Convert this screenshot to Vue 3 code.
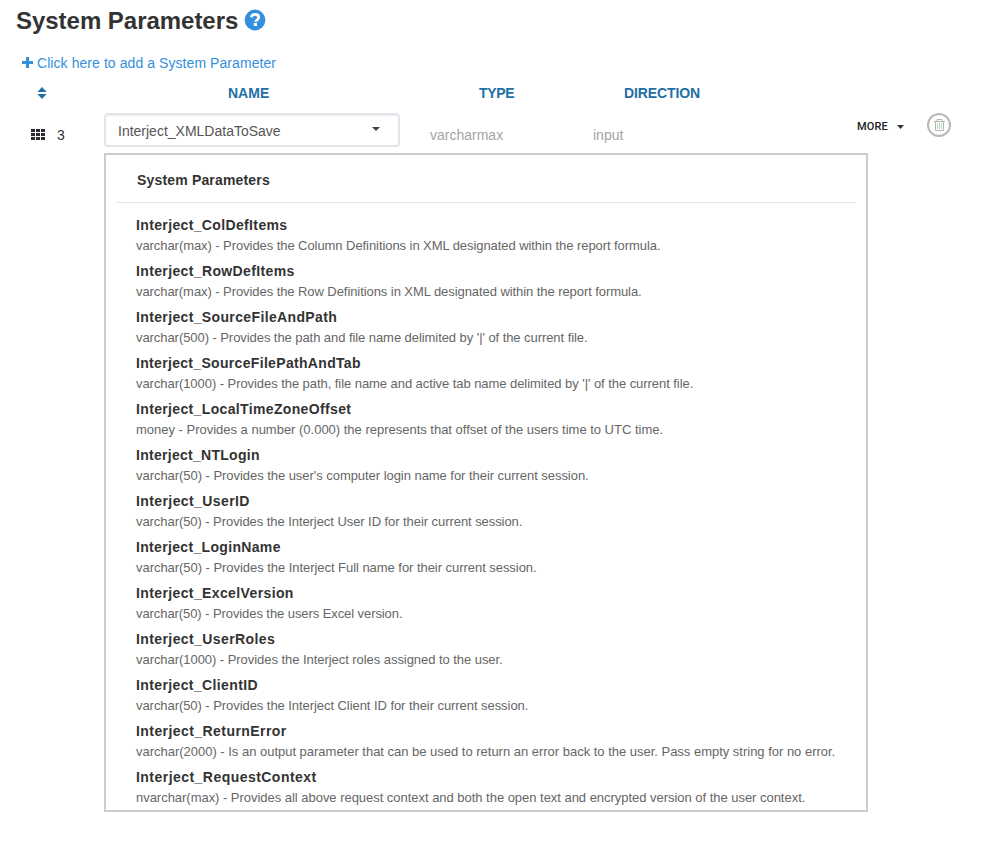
<script setup>
// name, description, and the tracking of each (px)
const items = [
  ['Interject_ColDefItems', "varchar(max) - Provides the Column Definitions in XML designated within the report formula.", 0.36, -0.067],
  ['Interject_RowDefItems', "varchar(max) - Provides the Row Definitions in XML designated within the report formula.", 0.37, -0.07],
  ['Interject_SourceFileAndPath', "varchar(500) - Provides the path and file name delimited by '|' of the current file.", 0.36, -0.066],
  ['Interject_SourceFilePathAndTab', "varchar(1000) - Provides the path, file name and active tab name delimited by '|' of the current file.", 0.32, -0.06],
  ['Interject_LocalTimeZoneOffset', "money - Provides a number (0.000) the represents that offset of the users time to UTC time.", 0.35, -0.01],
  ['Interject_NTLogin', "varchar(50) - Provides the user's computer login name for their current session.", 0.28, -0.045],
  ['Interject_UserID', "varchar(50) - Provides the Interject User ID for their current session.", 0.4, -0.064],
  ['Interject_LoginName', "varchar(50) - Provides the Interject Full name for their current session.", 0.33, -0.045],
  ['Interject_ExcelVersion', "varchar(50) - Provides the users Excel version.", 0.38, -0.08],
  ['Interject_UserRoles', "varchar(1000) - Provides the Interject roles assigned to the user.", 0.4, -0.05],
  ['Interject_ClientID', "varchar(50) - Provides the Interject Client ID for their current session.", 0.38, -0.06],
  ['Interject_ReturnError', "varchar(2000) - Is an output parameter that can be used to return an error back to the user. Pass empty string for no error.", 0.43, -0.014],
  ['Interject_RequestContext', "nvarchar(max) - Provides all above request context and both the open text and encrypted version of the user context.", 0.46, -0.03],
]
</script>

<template>
  <main class="page">
    <h1 class="title">
      <span>System Parameters</span>
      <svg class="help" viewBox="0 0 22 22" width="22" height="22">
        <circle cx="11" cy="11" r="10.4" fill="#348fdd" />
        <path d="M7.2 8.3C7.8 6.1 9.2 5.3 11 5.3c2.2 0 3.7 1.2 3.7 3 0 2.4-2.9 2.5-2.9 4.4" fill="none" stroke="#fff" stroke-width="2.8" />
        <rect x="9.8" y="14" width="3.2" height="3" fill="#fff" />
      </svg>
    </h1>
    <a class="add">
      <svg viewBox="0 0 11 11" width="11" height="11"><path d="M4 0h3v4h4v3H7v4H4V7H0V4h4z" fill="#348fdd" /></svg>
      <span>Click here to add a System Parameter</span>
    </a>
    <div class="grid head">
      <svg class="sort" viewBox="0 0 10 12" width="10" height="12"><path d="M5 0l4.6 5H.4zM5 12l4.6-5H.4z" fill="#236fa5" /></svg>
      <span class="h-name">NAME</span>
      <span class="h-type">TYPE</span>
      <span class="h-dir">DIRECTION</span>
    </div>
    <div class="grid row">
      <div class="order">
        <svg viewBox="0 0 14 11" width="14" height="11" fill="#2b2b33">
          <template v-for="r in 3" :key="r">
            <rect v-for="c in 3" :key="c" :x="(c - 1) * 5" :y="(r - 1) * 4" width="4" height="3" />
          </template>
        </svg>
        <span>3</span>
      </div>
      <div class="select">
        <span>Interject_XMLDataToSave</span>
        <svg viewBox="0 0 8 4" width="8" height="4"><path d="M0 0h8L4 4z" fill="#444" /></svg>
      </div>
      <span class="type">varcharmax</span>
      <span class="dir">input</span>
      <div class="more">
        <span>MORE</span>
        <svg viewBox="0 0 7 4" width="7" height="4"><path d="M0 0h7L3.5 4z" fill="#333" /></svg>
      </div>
      <svg class="trash" viewBox="0 0 24 24" width="24" height="24" fill="none">
        <circle cx="12" cy="12" r="11" stroke="#b9b9b9" stroke-width="2" />
        <path d="M7 8.5h11M10 8V6.5h5V8M8.5 9v8.5h8V9" stroke="#b5b5b5" />
        <path d="M10.5 10v6M12.5 10v6M14.5 10v6" stroke="#b2dab4" />
      </svg>
    </div>
    <section class="panel">
      <h2>System Parameters</h2>
      <ul>
        <li v-for="[name, text, nameTrack, textTrack] in items" :key="name">
          <strong :style="{ letterSpacing: nameTrack + 'px' }">{{ name }}</strong>
          <p :style="{ letterSpacing: textTrack + 'px' }">{{ text }}</p>
        </li>
      </ul>
    </section>
  </main>
</template>

<style>
body { background: #fff; }
</style>
<style scoped>
.page { box-sizing: border-box; width: 1001px; height: 854px; padding-top: 6px; overflow: hidden; font-family: "Liberation Sans", Arial, sans-serif; font-size: 14px; color: #333; }
.title { display: flex; align-items: center; gap: 6px; margin: 0 0 0 16px; height: 30px; font-size: 24px; line-height: 30px; }
.title span { letter-spacing: -0.03px; }
.help { margin-top: -2px; }
.add { display: flex; align-items: center; gap: 4px; margin: 17px 0 0 22px; height: 20px; color: #348fdd; white-space: nowrap; letter-spacing: 0.07px; }
.add svg { margin-top: -1px; }
.grid { display: grid; grid-template-columns: 104px 326px 163px 264px 70px 1fr; }
.head { height: 20px; margin-top: 10px; line-height: 20px; font-weight: bold; color: #236fa5; }
.sort { margin: 4px 0 0 37px; }
.h-name { margin-left: 124px; }
.h-type { margin-left: 49px; letter-spacing: -0.3px; }
.h-dir { margin-left: 31px; letter-spacing: -0.1px; }
.row { height: 50px; }
.order { display: flex; align-items: center; gap: 12px; height: 20px; margin: 22px 0 0 31px; }
.order svg { margin-top: -1px; }
.select { box-sizing: border-box; display: flex; justify-content: space-between; width: 296px; height: 34px; margin-top: 10px; padding: 0 18px 0 12px; border: 2px solid #e1e6ec; border-radius: 4px; line-height: 32px; color: #555; box-shadow: inset 0 1px 2px #eee; }
.select svg { margin-top: 12px; }
.type, .dir { margin-top: 22px; line-height: 20px; color: #a5a5a5; }
.more { display: flex; align-items: center; gap: 9px; height: 20px; margin-top: 13px; font: 500 11px Roboto, sans-serif; color: #222; }
.more span { letter-spacing: 0.15px; }
.more svg { margin-top: 2px; }
.trash { margin-top: 10px; }
.panel { box-sizing: border-box; width: 764px; height: 659px; margin-left: 104px; padding: 0 10px; border: 2px solid #ccc; }
.panel h2 { height: 47px; margin: 0; padding-left: 21px; border-bottom: 1px solid #e5e5e5; font-size: 14px; line-height: 50px; letter-spacing: 0.17px; }
ul { list-style: none; margin: 0; padding: 10px 0 0 20px; }
li { height: 46px; white-space: nowrap; }
strong { display: block; height: 24px; line-height: 24px; }
p { margin: 0; height: 18px; line-height: 18px; font-size: 13px; color: #666; }
</style>
